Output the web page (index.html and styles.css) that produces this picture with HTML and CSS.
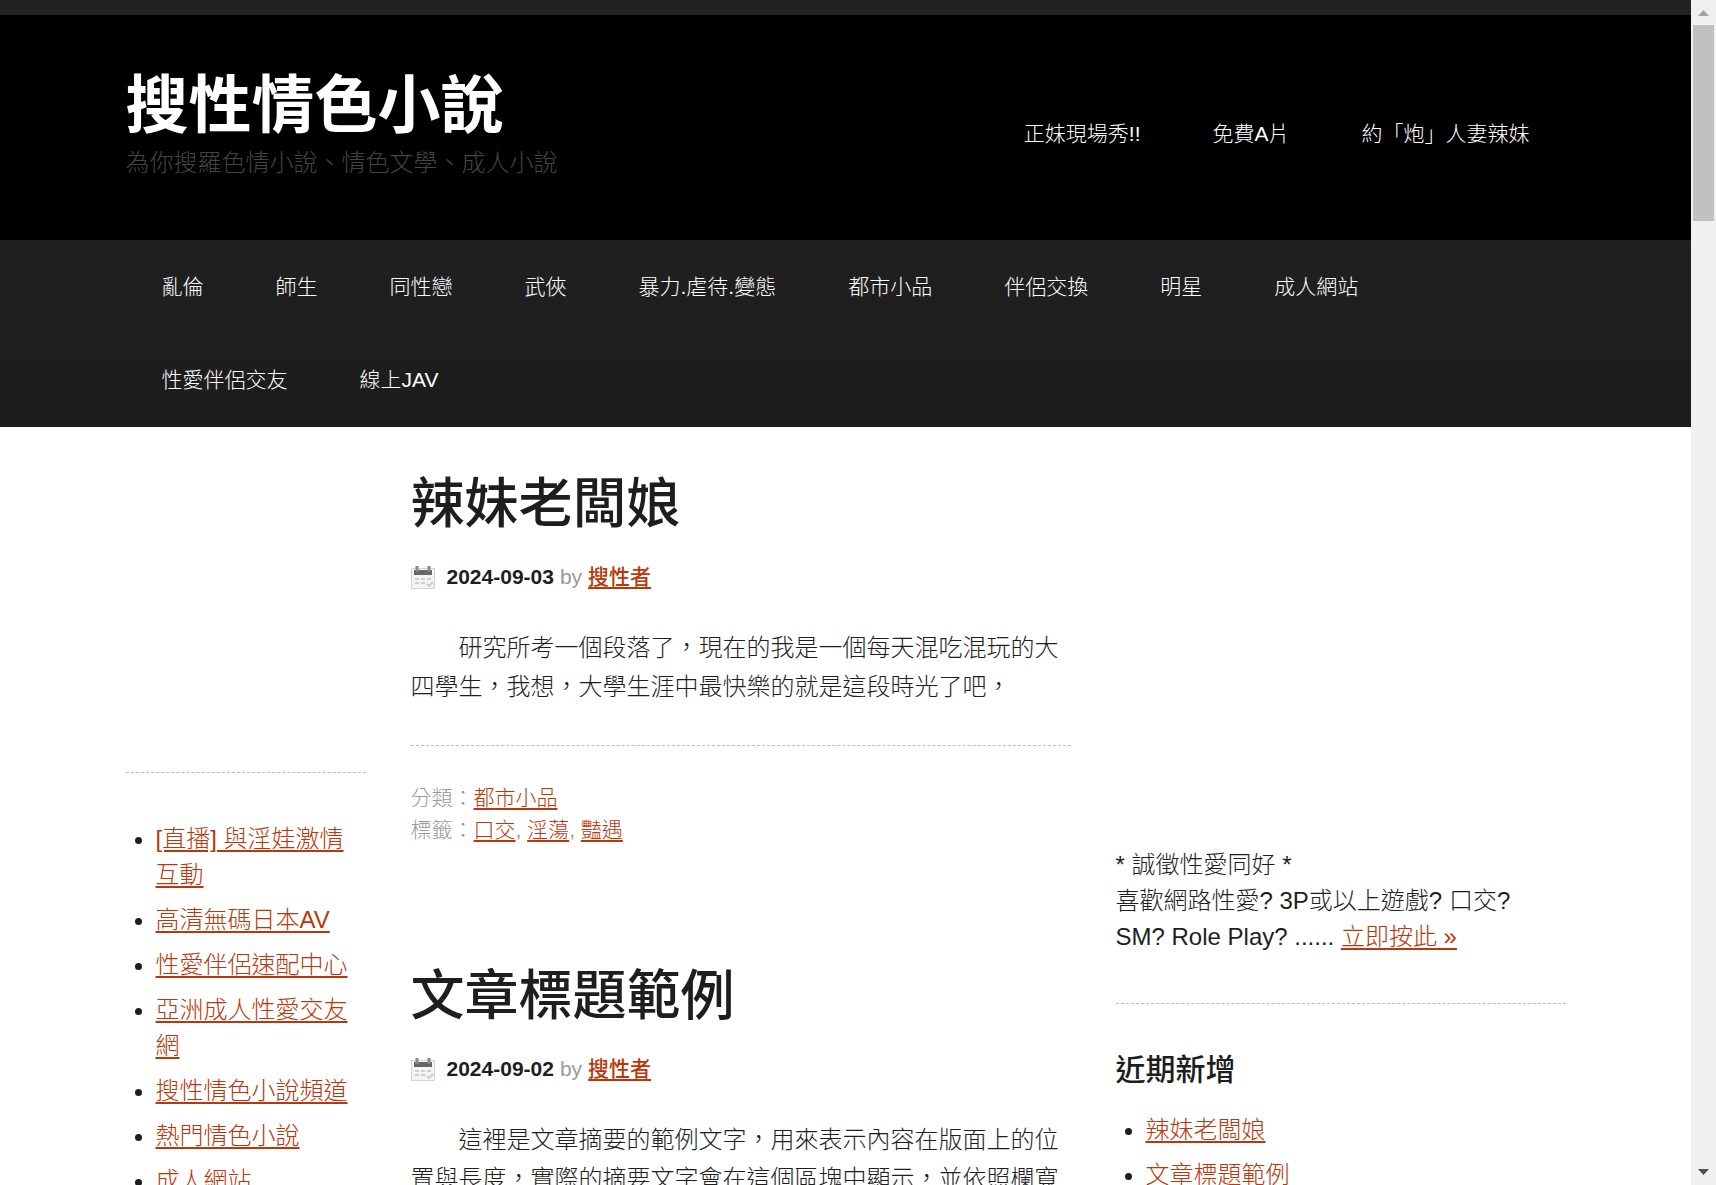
FILE: index.html
```html
<!DOCTYPE html>
<html lang="zh-Hant">
<head>
<meta charset="utf-8">
<title>搜性情色小說</title>
<link rel="stylesheet" href="styles.css">
</head>
<body>

<div class="page">

	<!-- start:header -->
	<header class="site-header">
		<div class="wrap header-wrap">
			<div class="title-area">
				<h1 class="site-title"><a href="#">搜性情色小說</a></h1>
				<p class="site-description">為你搜羅色情小說、情色文學、成人小說</p>
			</div>
			<nav class="header-nav">
				<ul class="menu">
					<li><a href="#">正妹現場秀!!</a></li>
					<li><a href="#">免費A片</a></li>
					<li><a href="#">約「炮」人妻辣妹</a></li>
				</ul>
			</nav>
		</div>
	</header>
	<!-- end:header -->

	<nav class="nav-primary">
		<ul class="menu wrap">
			<li><a href="#">亂倫</a></li>
			<li><a href="#">師生</a></li>
			<li><a href="#">同性戀</a></li>
			<li><a href="#">武俠</a></li>
			<li><a href="#">暴力.虐待.變態</a></li>
			<li><a href="#">都市小品</a></li>
			<li><a href="#">伴侶交換</a></li>
			<li><a href="#">明星</a></li>
			<li><a href="#">成人網站</a></li>
			<li><a href="#">性愛伴侶交友</a></li>
			<li><a href="#">線上JAV</a></li>
		</ul>
	</nav>

	<!-- start:content -->
	<div class="wrap columns">

		<aside class="sidebar sidebar-left">
			<div class="widget banner"></div>
			<div class="widget">
				<ul class="links">
					<li><a href="#">[直播] 與淫娃激情互動</a></li>
					<li><a href="#">高清無碼日本AV</a></li>
					<li><a href="#">性愛伴侶速配中心</a></li>
					<li><a href="#">亞洲成人性愛交友網</a></li>
					<li><a href="#">搜性情色小說頻道</a></li>
					<li><a href="#">熱門情色小說</a></li>
					<li><a href="#">成人網站</a></li>
				</ul>
			</div>
		</aside>

		<main class="content">
			<article class="entry">
				<h2 class="entry-title"><a href="#">辣妹老闆娘</a></h2>
				<p class="entry-info">
					<svg class="icon" viewBox="0 0 24 24"><rect x="0.500" y="3.500" width="23" height="20" fill="#f4f4f4" stroke="#d4d4d4"/><rect x="3" y="5" width="18" height="5" fill="#666"/><path d="M6 1v6M18 1v6" stroke="#888" stroke-width="3"/><path d="M4 14h4m2 0h4m2 0h4M4 18h4m2 0h4" stroke="#d0d0d0" stroke-width="2"/><path d="M16 19l2 2 4-4" fill="none" stroke="#d0d0d0" stroke-width="2"/></svg>
					<time>2024-09-03</time> by <a href="#">搜性者</a>
				</p>
				<p class="entry-text">　　研究所考一個段落了，現在的我是一個每天混吃混玩的大四學生，我想，大學生涯中最快樂的就是這段時光了吧，</p>
				<footer class="entry-meta">
					分類：<a href="#">都市小品</a><br>
					標籤：<a href="#">口交</a>, <a href="#">淫蕩</a>, <a href="#">豔遇</a>
				</footer>
			</article>

			<article class="entry">
				<h2 class="entry-title"><a href="#">文章標題範例</a></h2>
				<p class="entry-info">
					<svg class="icon" viewBox="0 0 24 24"><rect x="0.500" y="3.500" width="23" height="20" fill="#f4f4f4" stroke="#d4d4d4"/><rect x="3" y="5" width="18" height="5" fill="#666"/><path d="M6 1v6M18 1v6" stroke="#888" stroke-width="3"/><path d="M4 14h4m2 0h4m2 0h4M4 18h4m2 0h4" stroke="#d0d0d0" stroke-width="2"/><path d="M16 19l2 2 4-4" fill="none" stroke="#d0d0d0" stroke-width="2"/></svg>
					<time>2024-09-02</time> by <a href="#">搜性者</a>
				</p>
				<p class="entry-text">　　這裡是文章摘要的範例文字，用來表示內容在版面上的位置與長度，實際的摘要文字會在這個區塊中顯示，並依照欄寬自動換行。</p>
			</article>
		</main>

		<aside class="sidebar sidebar-right">
			<div class="widget notice">
				<p>* 誠徵性愛同好 *<br>喜歡網路性愛? 3P或以上遊戲? 口交? SM? Role Play? ...... <a href="#">立即按此 »</a></p>
			</div>
			<div class="widget">
				<h3 class="widget-title">近期新增</h3>
				<ul class="links">
					<li><a href="#">辣妹老闆娘</a></li>
					<li><a href="#">文章標題範例</a></li>
				</ul>
			</div>
		</aside>

	</div>
	<!-- end:content -->

</div>

<div class="scrollbar">
	<svg class="arrow" viewBox="0 0 25 25"><path d="M7 16h11l-5.500-6z" fill="#a3a3a3"/></svg>
	<div class="thumb"></div>
	<svg class="arrow" viewBox="0 0 25 25"><path d="M7 9h11l-5.500 6z" fill="#505050"/></svg>
</div>

</body>
</html>
```
FILE: styles.css
```css
* {box-sizing: border-box;}
body, h1, h2, h3, p, ul {margin: 0; padding: 0;}
body {display: flex; height: 100vh; overflow: hidden; background: #fff; color: #1e1e1e; font: 300 24px/36px "Liberation Sans", "Noto Sans CJK TC", sans-serif;}
a {color: #bc360a; text-decoration-thickness: 2px; text-underline-offset: 3px;}

/* ---------- STRUCTURE ---------- */
.page {flex: 1; min-width: 0; overflow: hidden; border-top: 15px solid #222;}
.wrap {max-width: 1440px; margin: 0 auto;}
.columns {display: grid; grid-template-columns: 240px 1fr 450px; column-gap: 45px;}

/* ---------- HEADER ---------- */
.site-header {background: #000;}
.header-wrap {display: flex; justify-content: space-between; padding: 54px 0 57px;}
.site-title {font-size: 63px; line-height: 72px; font-weight: 700;}
.site-title a {color: #fff; text-decoration: none;}
.site-description {padding-top: 2px; color: #444; line-height: 40px;}
.header-nav {padding-top: 48px;}

/* ---------- MENUS ---------- */
.menu {display: flex; flex-wrap: wrap; list-style: none; font-size: 21px; line-height: 33px;}
.menu a {display: block; padding: 0 36px; color: #fff; text-decoration: none;}
.nav-primary {padding-bottom: 1px; background: linear-gradient(#202020, #1c1c1c);}
.nav-primary a {padding: 30px 36px;}

/* ---------- ENTRIES ---------- */
.content {padding-top: 47px;}
.entry {margin-bottom: 120px;}
.entry-title {font-size: 54px; line-height: 60px; font-weight: 500;}
.entry-title a {color: #1e1e1e; text-decoration: none;}
.entry-info {display: flex; align-items: center; gap: 6px; margin: 27px 0 35px; color: #999; font-size: 21px; line-height: 32px;}
.entry-info time {color: #1e1e1e; font-weight: bold;}
.entry-info a {font-weight: 500;}
.icon {width: 24px; height: 24px; margin-right: 6px;}
.entry-text {line-height: 39px;}
.entry-meta {margin-top: 39px; padding-top: 36px; border-top: 1px dashed #bbb; color: #999; font-size: 21px; line-height: 32px;}

/* ---------- SIDEBARS ---------- */
.widget {padding-bottom: 48px; margin-bottom: 48px; border-bottom: 1px dashed #bbb;}
.widget:last-child {border: 0;}
.banner {height: 346px;}
.notice {padding-top: 420px;}
.widget-title {margin-bottom: 24px; font-size: 30px; line-height: 36px; font-weight: 500;}
.links {padding-left: 30px;}
.links li {margin-bottom: 9px;}

/* ---------- SCROLLBAR ---------- */
.scrollbar {display: flex; flex-direction: column; width: 25px; background: #f0f0f0;}
.arrow {width: 25px; height: 25px;}
.arrow:last-child {margin-top: auto;}
.thumb {height: 196px; margin: 0 2px; background: #c1c1c1;}
```
